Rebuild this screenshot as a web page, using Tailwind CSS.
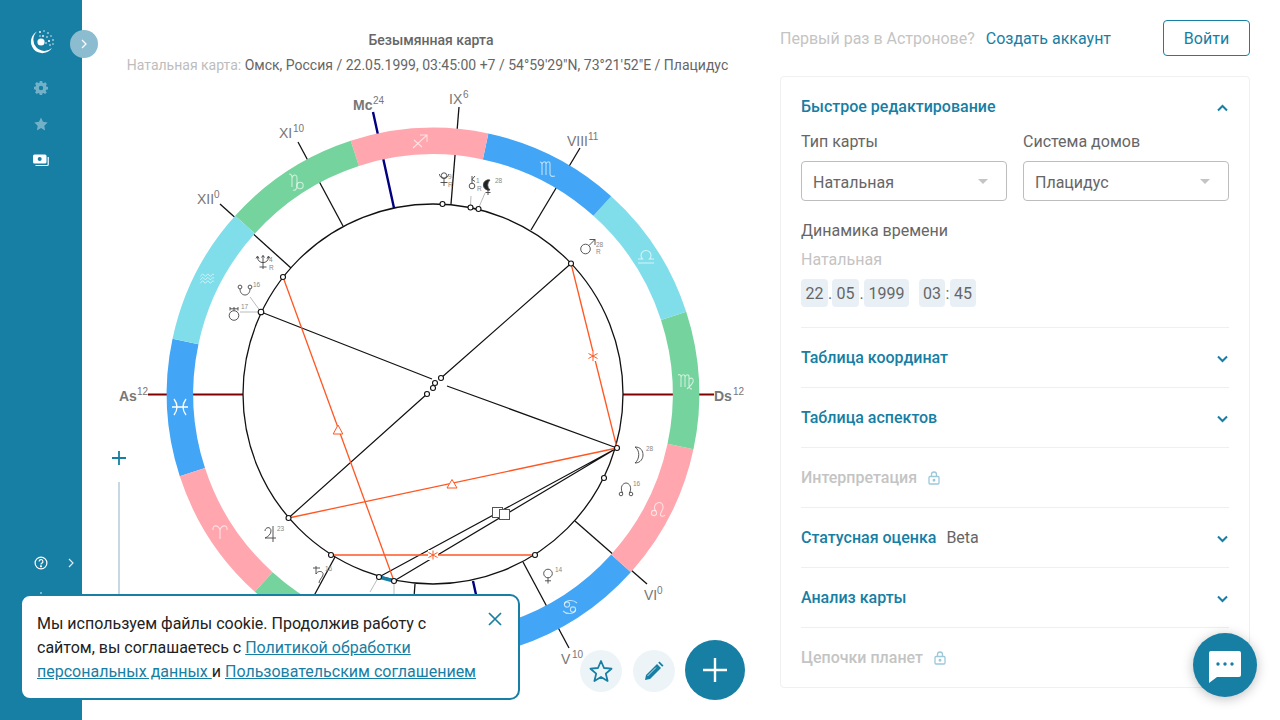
<!DOCTYPE html>
<html lang="ru">
<head>
<meta charset="utf-8">
<title>Карта</title>
<script src="https://cdn.jsdelivr.net/npm/@tailwindcss/browser@4"></script>
</head>
<body class="m-0 bg-white">
<div class="relative flex h-[720px] w-[1280px] overflow-hidden bg-white font-['Roboto',sans-serif] text-[#666]">

  <!-- Sidebar -->
  <aside class="flex h-full w-[82px] shrink-0 flex-col items-center bg-[#177ea4]">
    <svg class="mt-[29px]" width="26" height="26" viewBox="0 0 26 26">
      <path d="M9 2.5A11.5 11.5 0 1 0 24 19 A10 10 0 0 1 9 2.5Z" fill="#fff"/>
      <circle cx="13" cy="13" r="3.6" fill="#fff"/>
      <g fill="#fff">
        <circle cx="12" cy="3" r=".9"/><circle cx="16" cy="2" r=".7"/><circle cx="20" cy="4" r=".8"/><circle cx="23" cy="7" r=".7"/><circle cx="25" cy="11" r=".8"/><circle cx="25" cy="15" r=".7"/><circle cx="15" cy="7" r=".9"/><circle cx="19" cy="8" r=".8"/><circle cx="21" cy="12" r="1"/><circle cx="18" cy="14" r=".8"/><circle cx="22" cy="16" r=".8"/><circle cx="12" cy="7" r=".7"/>
      </g>
    </svg>
    <svg class="mt-[26px]" width="14" height="14" viewBox="0 0 14 14" fill="#fff" fill-opacity=".4">
      <path fill-rule="evenodd" d="M5.8 0h2.4l.4 1.9 1 .4 1.6-1 1.7 1.7-1 1.6.4 1 1.700.4v2.400l-1.900.4-.4 1 1 1.600-1.700 1.700-1.600-1-1 .4-.4 1.900H5.800l-.4-1.900-1-.4-1.600 1-1.700-1.700 1-1.600-.4-1L0 8.200V5.800l1.700-.4.4-1-1-1.600 1.700-1.700 1.600 1 1-.4zM7 4.800a2.200 2.200 0 1 0 0 4.400 2.200 2.200 0 0 0 0-4.400z"/>
    </svg>
    <svg class="mt-[22px]" width="14" height="14" viewBox="0 0 14 14" fill="#fff" fill-opacity=".4">
      <path d="M7 .5l2 4.300 4.700.6-3.400 3.300.8 4.700L7 11.100l-4.100 2.300.8-4.700L.3 5.400 5 4.800z"/>
    </svg>
    <svg class="mt-[22px]" width="16" height="14" viewBox="0 0 16 14">
      <rect x="0" y="1.500" width="13.500" height="9" rx="1.500" fill="#fff"/>
      <circle cx="6.700" cy="6" r="2" fill="#177ea4"/>
      <path d="M15.200 4v7.500a1 1 0 0 1-1 1H2.500" fill="none" stroke="#fff" stroke-width="1.200"/>
    </svg>
    <div class="mt-auto flex w-full items-center pl-[34px]">
      <svg width="14" height="14" viewBox="0 0 14 14" fill="none" stroke="#fff" stroke-width="1.200">
        <circle cx="7" cy="7" r="5.900"/>
        <path d="M5.100 5.400a1.900 1.900 0 1 1 2.800 1.700c-.6.3-.9.7-.9 1.400"/>
        <circle cx="7" cy="10.300" r=".5" fill="#fff"/>
      </svg>
      <svg class="ml-[20px]" width="6" height="10" viewBox="0 0 6 10" fill="none" stroke="#fff" stroke-width="1.200" stroke-opacity=".85"><path d="M1 1l4 4-4 4"/></svg>
    </div>
    <svg class="mt-[22px] mb-[114px]" width="14" height="14" viewBox="0 0 14 14"><circle cx="7" cy="1" r="1" fill="#fff" fill-opacity=".6"/></svg>
  </aside>

  <!-- Chart column -->
  <main class="h-full w-[698px] shrink-0">
    <div class="pt-[31px] text-center">
      <h1 class="text-[14px] leading-[18px] font-medium text-[#666]">Безымянная карта</h1>
      <p class="mt-[7px] pr-[7px] text-[14px] leading-[18px] text-[#666]"><span class="text-[#bdbdbd]">Натальная карта:</span> Омск, Россия / 22.05.1999, 03:45:00 +7 / 54°59'29"N, 73°21'52"E / Плацидус</p>
    </div>
    <svg class="mt-[16px] block" width="698" height="630" viewBox="82 90 698 630" fill="none">
      <defs>
        <g id="z-aries"><path d="M-7-2C-8-7-2-8 0-2V7M0-2C2-8 8-7 7-2"/></g>
        <g id="z-cancer"><circle cx="-3" cy="-2.500" r="2.600"/><circle cx="3" cy="2.500" r="2.600"/><path d="M-5.600-2.500C-5-7 3-8 7-4M5.600 2.500C5 7-3 8-7 4"/></g>
        <g id="z-leo"><circle cx="-4" cy="4" r="2.600"/><path d="M-2.500 2C-7-7 6-10 5-1 4.500 2 2 4 2.500 6 3 8 6 7.500 7 6"/></g>
        <g id="z-virgo"><path d="M-8-6C-6-7-5-6-5-4V6M-5-4C-4-7-1-7-1-4V6M-1-4C0-7 3-7 3-4V5C3 7 5 8 6 8M3-2C6-4 8-2 7 1 6 4 3 6 1 8"/></g>
        <g id="z-libra"><path d="M-8 6H8M-8 2H-3.500A5 5 0 1 1 3.500 2H8"/></g>
        <g id="z-scorpio"><path d="M-8-7C-6-7-6-6-6-4V6M-6-5C-5-8-2-8-2-5V6M-2-5C-1-8 2-8 2-5V5C2 7 4 8 7 7"/></g>
        <g id="z-sag"><path d="M-7 7L7-6M0-6H7V1M-6-1L2 6"/></g>
        <g id="z-cap"><path d="M-7-8C-5-8-4-6-4-4V5M-4-4C-3-8 1-8 1-4V4C1 7-1 9-3 8"/><circle cx="4" cy="3.500" r="3.200"/></g>
        <g id="z-aqua"><path d="M-8-3L-5-6-2-3 1-6 4-3 7-6 8-5M-8 1L-5-2-2 1 1-2 4 1 7-2 8-1M-8 5L-5 2-2 5 1 2 4 5 7 2 8 3"/></g>
        <g id="z-pisces"><path d="M-6-8Q0 0-6 8M6-8Q0 0 6 8M-8 0H8"/></g>
      </defs>

      <!-- House cusps -->
      <g stroke="#111" stroke-width="1.300">
        <path d="M220 204L291 268"/>
        <path d="M298 142L343 226"/>
        <path d="M459 107L451 204"/>
        <path d="M580 148L531 230"/>
        <path d="M647 584L575 521"/>
        <path d="M569 648L523 562"/>
        <path d="M335 557L290 640"/>
        <path d="M415 584L407 690"/>
      </g>
      <path d="M148 394.500H243M623 394.500H714" stroke="#800000" stroke-width="2.200"/>
      <path d="M373 112L394 208M473 581L494 676" stroke="#000080" stroke-width="2.400"/>

      <!-- Zodiac ring -->
      <g stroke-width="26.500">
        <path stroke="#42a5f5" d="M185.500 341.400A253 253 0 0 0 192.400 472.200"/>
        <path stroke="#ffa6ae" d="M192.400 472.200A253 253 0 0 0 263.700 582"/>
        <path stroke="#75d39d" d="M263.700 582A253 253 0 0 0 380.400 641.500"/>
        <path stroke="#80deea" d="M380.400 641.500A253 253 0 0 0 511.200 634.600"/>
        <path stroke="#42a5f5" d="M511.200 634.600A253 253 0 0 0 621 563.300"/>
        <path stroke="#ffa6ae" d="M621 563.300A253 253 0 0 0 680.500 446.600"/>
        <path stroke="#75d39d" d="M680.500 446.600A253 253 0 0 0 673.600 315.800"/>
        <path stroke="#80deea" d="M673.600 315.800A253 253 0 0 0 602.300 206"/>
        <path stroke="#42a5f5" d="M602.300 206A253 253 0 0 0 485.600 146.500"/>
        <path stroke="#ffa6ae" d="M485.600 146.500A253 253 0 0 0 354.800 153.400"/>
        <path stroke="#75d39d" d="M354.800 153.400A253 253 0 0 0 245 224.700"/>
        <path stroke="#80deea" d="M245 224.700A253 253 0 0 0 185.500 341.400"/>
      </g>
      <g stroke="#fff" stroke-width="1.100" stroke-opacity=".65">
        <use href="#z-pisces" transform="translate(180 407)" stroke-opacity="1" stroke-width="1.300"/>
        <use href="#z-aries" transform="translate(220 532)"/>
        <use href="#z-cancer" transform="translate(570 607)"/>
        <use href="#z-leo" transform="translate(658 509)"/>
        <use href="#z-virgo" transform="translate(686 381)"/>
        <use href="#z-libra" transform="translate(646 257)"/>
        <use href="#z-scorpio" transform="translate(548 169)"/>
        <use href="#z-sag" transform="translate(420 141)"/>
        <use href="#z-cap" transform="translate(296 182)"/>
        <use href="#z-aqua" transform="translate(207 279) scale(.85)"/>
      </g>

      <!-- Inner circle -->
      <circle cx="433" cy="394" r="190" fill="#fff" stroke="#111" stroke-width="1.300"/>

      <!-- Aspects -->
      <g stroke="#111" stroke-width="1.200">
        <path d="M571 263.500L441 378M427 394L288.500 518"/>
        <path d="M261 312L432 379M447 386L617 448"/>
        <path d="M379 577L617 448M394 581L617 448"/>
      </g>
      <path d="M379 577L394 581" stroke="#177ea4" stroke-width="3.500"/>
      <g stroke="#ff5722" stroke-width="1.300">
        <path d="M283 277L394 581"/>
        <path d="M571 263.500L617 448"/>
        <path d="M288.500 518L617 448"/>
        <path d="M331 555H535"/>
      </g>
      <g fill="#fff" stroke="#ff5722" stroke-width="1">
        <path d="M338 425L342.800 434H333.200Z"/>
        <path d="M452 479.500L457 488H447Z"/>
      </g>
      <g stroke="#ff5722" stroke-width="1">
        <rect x="588" y="351" width="10" height="10" fill="#fff" stroke="none"/>
        <path d="M593 351V361M588.500 353.500L597.500 358.500M597.500 353.500L588.500 358.500"/>
        <rect x="428" y="550" width="10" height="10" fill="#fff" stroke="none"/>
        <path d="M433 550.500V559.500M428.500 552.500L437.500 557.500M437.500 552.500L428.500 557.500"/>
      </g>
      <g fill="#fff" stroke="#555" stroke-width="1">
        <rect x="492.500" y="507.500" width="10" height="10"/>
        <rect x="499.500" y="509.500" width="10" height="10"/>
      </g>

      <!-- Leader lines -->
      <g stroke="#aaa" stroke-width=".8">
        <path d="M250 297L261 312M240 312H259M471 196L470.500 205M485 193L479 207M378 578L370 592M394 581V596"/>
      </g>

      <!-- Planet dots -->
      <g fill="#fff" stroke="#111" stroke-width="1.100">
        <circle cx="442.500" cy="204" r="2.500"/><circle cx="470.500" cy="207.500" r="2.500"/><circle cx="478.500" cy="209" r="2.500"/>
        <circle cx="571" cy="263.500" r="2.500"/><circle cx="283" cy="277" r="2.500"/><circle cx="261" cy="312" r="2.800"/>
        <circle cx="617" cy="448" r="2.500"/><circle cx="604" cy="478" r="2.500"/><circle cx="535" cy="555" r="2.500"/>
        <circle cx="394" cy="581" r="2.500"/><circle cx="379" cy="577" r="2.500"/><circle cx="331" cy="555" r="2.500"/><circle cx="288.500" cy="518" r="2.500"/>
        <circle cx="435" cy="383" r="2.500"/><circle cx="441" cy="378" r="2.500"/><circle cx="433" cy="388" r="2.500"/><circle cx="427" cy="394" r="2.500"/>
      </g>

      <!-- Planet symbols -->
      <g stroke="#444" stroke-width=".9">
        <g transform="translate(444 179)"><circle cx="0" cy="-3.500" r="2.700"/><path d="M-4.500-5A4.500 4.500 0 0 0 4.500-5M0-.5V7M-3.500 3.500H3.500"/></g>
        <g transform="translate(472 183)"><circle cx="0" cy="3" r="2.800"/><path d="M0 .2V-7M0-3.500L3-7M0-3.500L3-1.500"/></g>
        <g transform="translate(488 186)"><path d="M2-6A5.200 5.200 0 1 0 2 4 6.500 6.500 0 0 1 2-6Z" fill="#222"/><path d="M0 4V9M-2.500 6.500H2.500"/></g>
        <g transform="translate(588 247)"><circle cx="-2.500" cy="2" r="4.800"/><path d="M1 -1.500L7-7.500M1.500-7.500H7V-2"/></g>
        <g transform="translate(263 262)"><path d="M-5.500-5C-5.500 2.500 5.500 2.500 5.500-5M0-6.500V7M-3.500 5H3.500M-7-3.500L-5.500-6-4-3.500M4-3.500L5.500-6 7-3.500M-1.500-4.500L0-6.500 1.500-4.500"/></g>
        <g transform="translate(245 292)"><circle cx="-5" cy="-5" r="1.900"/><circle cx="5" cy="-5" r="1.900"/><path d="M-5-3C-5 5 5 5 5-3"/></g>
        <g transform="translate(234 313)"><circle cx="0" cy="2.500" r="4.800"/><path d="M-4-6V-2.500M4-6V-2.500M-4-4.200H4M0-6V-2.500"/></g>
        <g transform="translate(639 455)"><path d="M-4-8C1-5 1 4-4 8 2 8 4 3 4 0 4-4 2-8-4-8Z"/></g>
        <g transform="translate(626 489)"><circle cx="-5" cy="5" r="1.800"/><circle cx="5" cy="5" r="1.800"/><path d="M-3.500 4C-6.500-2-3-6 0-6S6.500-2 3.500 4"/></g>
        <g transform="translate(548 576)"><circle cx="0" cy="-2.500" r="4.300"/><path d="M0 1.800V7.500M-3 4.800H3"/></g>
        <g transform="translate(270 534)"><path d="M-5-3C-5-7 1-8 1-3 1 0-2 3-5 4H6M3-8V8"/></g>
        <g transform="translate(318 575)"><path d="M-5-7H2M-2-9V-1C0-5 6-4 5 0 4 3 1 5 1 8"/></g>
      </g>

      <!-- Degrees -->
      <g fill="#888" font-family="Liberation Sans, sans-serif" font-size="6.500">
        <text x="448" y="179">9</text><text x="448" y="187">R</text>
        <text x="476" y="183">1</text><text x="477" y="191">R</text>
        <text x="495" y="183">28</text>
        <text x="596" y="247">28</text><text x="596" y="254">R</text>
        <text x="269" y="262">4</text><text x="269" y="270">R</text>
        <text x="253" y="287">16</text>
        <text x="241" y="309">17</text>
        <text x="646" y="451">28</text>
        <text x="633" y="486">16</text>
        <text x="555" y="572">14</text>
        <text x="277" y="531">23</text>
        <text x="325" y="571">16</text>
      </g>

      <!-- Labels -->
      <g fill="#777" font-family="Liberation Sans, sans-serif" font-size="14">
        <text x="197" y="204">XII</text><text x="214" y="198" font-size="10">0</text>
        <text x="279" y="138">XI</text><text x="293" y="132" font-size="10">10</text>
        <text x="449" y="104">IX</text><text x="463" y="98" font-size="10">6</text>
        <text x="567" y="146">VIII</text><text x="588" y="140" font-size="10">11</text>
        <text x="644" y="600">VI</text><text x="657" y="594" font-size="10">0</text>
        <text x="561" y="664">V</text><text x="572" y="658" font-size="10">10</text>
        <text x="353" y="110" font-weight="700">Mc</text><text x="373" y="104" font-size="10">24</text>
        <text x="119" y="401" font-weight="700">As</text><text x="137" y="395" font-size="10">12</text>
        <text x="714" y="401" font-weight="700">Ds</text><text x="733" y="395" font-size="10">12</text>
      </g>
    </svg>
  </main>

  <!-- Right column -->
  <section class="h-full w-[470px] shrink-0">
    <header class="mt-[20px] flex h-[36px] items-center text-[16px]">
      <span class="pt-[2px] text-[#c4c4c4]">Первый раз в Астронове?</span>
      <a class="ml-[11px] pt-[2px] text-[#177ea4]">Создать аккаунт</a>
      <button class="ml-auto h-[36px] w-[87px] rounded-[4px] border border-[#177ea4] pt-[2px] text-[16px] text-[#177ea4]">Войти</button>
    </header>

    <div class="mt-[20px] h-[612px] rounded-[4px] border border-[#f0f0f0] px-[20px]">
      <div class="border-b border-[#efefef] pt-[20px] pb-[20px]">
        <div class="flex h-[20px] items-center justify-between">
          <h2 class="text-[16px] font-medium text-[#177ea4]">Быстрое редактирование</h2>
          <svg class="mt-[2px]" width="12" height="8" viewBox="0 0 12 8" fill="none" stroke="#177ea4" stroke-width="2"><path d="M1 6.500l4.500-4.500 4.500 4.500"/></svg>
        </div>
        <div class="mt-[15px] grid grid-cols-2 gap-x-[16px]">
          <div>
            <div class="h-[20px] text-[16px] leading-[20px]">Тип карты</div>
            <div class="mt-[9px] flex h-[40px] items-center justify-between rounded-[4px] border border-[#bdbdbd] pr-[18px] pl-[11px] text-[16px]">
              <span class="pt-[4px]">Натальная</span>
              <svg width="10" height="5" viewBox="0 0 10 5"><path d="M0 0h10L5 5z" fill="#c4c4c4"/></svg>
            </div>
          </div>
          <div>
            <div class="h-[20px] text-[16px] leading-[20px]">Система домов</div>
            <div class="mt-[9px] flex h-[40px] items-center justify-between rounded-[4px] border border-[#bdbdbd] pr-[18px] pl-[11px] text-[16px]">
              <span class="pt-[4px]">Плацидус</span>
              <svg width="10" height="5" viewBox="0 0 10 5"><path d="M0 0h10L5 5z" fill="#c4c4c4"/></svg>
            </div>
          </div>
        </div>
        <div class="mt-[20px] h-[20px] text-[16px] leading-[20px]">Динамика времени</div>
        <div class="mt-[9px] h-[20px] text-[16px] leading-[20px] text-[#c4c4c4]">Натальная</div>
        <div class="mt-[9px] flex h-[28px] items-center text-[16px]">
          <span class="flex h-full w-[27px] items-center justify-center rounded-[4px] bg-[#e8f0f6] pt-[2px]">22</span>
          <span class="w-[4px] pt-[2px] text-center">.</span>
          <span class="flex h-full w-[27px] items-center justify-center rounded-[4px] bg-[#e8f0f6] pt-[2px]">05</span>
          <span class="w-[5px] pt-[2px] text-center">.</span>
          <span class="flex h-full w-[45px] items-center justify-center rounded-[4px] bg-[#e8f0f6] pt-[2px]">1999</span>
          <span class="ml-[10px] flex h-full w-[26px] items-center justify-center rounded-[4px] bg-[#e8f0f6] pt-[2px]">03</span>
          <span class="w-[5px] pt-[2px] text-center">:</span>
          <span class="flex h-full w-[26px] items-center justify-center rounded-[4px] bg-[#e8f0f6] pt-[2px]">45</span>
        </div>
      </div>

      <div class="flex h-[60px] items-center justify-between border-b border-[#efefef]">
        <h2 class="text-[16px] font-medium text-[#177ea4]">Таблица координат</h2>
        <svg class="mt-[2px]" width="12" height="8" viewBox="0 0 12 8" fill="none" stroke="#177ea4" stroke-width="2"><path d="M1 1.500l4.500 4.500 4.500-4.500"/></svg>
      </div>
      <div class="flex h-[60px] items-center justify-between border-b border-[#efefef]">
        <h2 class="text-[16px] font-medium text-[#177ea4]">Таблица аспектов</h2>
        <svg class="mt-[2px]" width="12" height="8" viewBox="0 0 12 8" fill="none" stroke="#177ea4" stroke-width="2"><path d="M1 1.500l4.500 4.500 4.500-4.500"/></svg>
      </div>
      <div class="flex h-[60px] items-center gap-[11px] border-b border-[#efefef]">
        <h2 class="text-[16px] font-medium text-[#c4c4c4]">Интерпретация</h2>
        <svg width="12" height="14" viewBox="0 0 12 14" fill="none" stroke="#9cc9da" stroke-width="1.300"><rect x="1" y="5.500" width="10" height="7.500" rx="1"/><path d="M3.500 5.500V3.500a2.500 2.500 0 0 1 5 0V5.500"/><circle cx="6" cy="9.200" r=".8" fill="#9cc9da"/></svg>
      </div>
      <div class="flex h-[60px] items-center border-b border-[#efefef]">
        <h2 class="text-[16px] font-medium text-[#177ea4]">Статусная оценка</h2>
        <span class="ml-[10px] text-[16px]">Beta</span>
        <svg class="mt-[2px] ml-auto" width="12" height="8" viewBox="0 0 12 8" fill="none" stroke="#177ea4" stroke-width="2"><path d="M1 1.500l4.500 4.500 4.500-4.500"/></svg>
      </div>
      <div class="flex h-[60px] items-center justify-between border-b border-[#efefef]">
        <h2 class="text-[16px] font-medium text-[#177ea4]">Анализ карты</h2>
        <svg class="mt-[2px]" width="12" height="8" viewBox="0 0 12 8" fill="none" stroke="#177ea4" stroke-width="2"><path d="M1 1.500l4.500 4.500 4.500-4.500"/></svg>
      </div>
      <div class="flex h-[60px] items-center gap-[11px]">
        <h2 class="text-[16px] font-medium text-[#c4c4c4]">Цепочки планет</h2>
        <svg width="12" height="14" viewBox="0 0 12 14" fill="none" stroke="#9cc9da" stroke-width="1.300"><rect x="1" y="5.500" width="10" height="7.500" rx="1"/><path d="M3.500 5.500V3.500a2.500 2.500 0 0 1 5 0V5.500"/><circle cx="6" cy="9.200" r=".8" fill="#9cc9da"/></svg>
      </div>
    </div>
  </section>

  <!-- Overlays -->
  <button class="absolute top-[30px] left-[70px] flex h-[28px] w-[28px] items-center justify-center rounded-full bg-[#8bbccf]">
    <svg width="6" height="10" viewBox="0 0 6 10" fill="none" stroke="#fff" stroke-width="1.200"><path d="M1 1l4 4-4 4"/></svg>
  </button>

  <!-- Zoom slider -->
  <div class="absolute top-[450px] left-[111px] flex flex-col items-center">
    <svg width="16" height="16" viewBox="0 0 16 16" stroke="#177ea4" stroke-width="1.800"><path d="M8 1v14M1 8h14"/></svg>
    <div class="mt-[16px] h-[120px] w-[2px] bg-[#c8d8e2]"></div>
  </div>

  <!-- Floating actions -->
  <button class="absolute top-[650px] left-[580px] flex h-[42px] w-[42px] items-center justify-center rounded-full bg-[#edf4f8]">
    <svg width="24" height="24" viewBox="0 0 24 24" fill="none" stroke="#177ea4" stroke-width="1.800" stroke-linejoin="round"><path d="M12 2l3 7 7.500.7-5.700 4.900 1.800 7.400L12 18l-6.600 4 1.800-7.400L1.500 9.700 9 9z"/></svg>
  </button>
  <button class="absolute top-[650px] left-[633px] flex h-[42px] w-[42px] items-center justify-center rounded-full bg-[#edf4f8]">
    <svg width="20" height="20" viewBox="0 0 20 20" fill="#177ea4"><path d="M1 19l1-5L13 3l4 4L6 18zM14.200 1.800l1.300-1.300 4 4-1.300 1.300z"/><path d="M3.500 15L12 6.500" stroke="#edf4f8" stroke-width=".8"/></svg>
  </button>
  <button class="absolute top-[640px] left-[685px] flex h-[60px] w-[60px] items-center justify-center rounded-full bg-[#177ea4]">
    <svg width="26" height="26" viewBox="0 0 26 26" stroke="#fff" stroke-width="2.400"><path d="M13 1v24M1 13h24"/></svg>
  </button>

  <!-- Cookie notice -->
  <div class="absolute top-[594px] left-[20px] h-[106px] w-[500px] rounded-[10px] border-2 border-[#177ea4] bg-white pt-[16px] pl-[15px] text-[16px] leading-[24px] text-[#222]">
    Мы используем файлы cookie. Продолжив работу с<br>
    сайтом, вы соглашаетесь с <a class="text-[#177ea4] underline">Политикой обработки<br>персональных данных </a> и <a class="text-[#177ea4] underline">Пользовательским соглашением</a>
    <svg class="absolute top-[15px] right-[15px]" width="16" height="16" viewBox="0 0 16 16" stroke="#177ea4" stroke-width="1.700"><path d="M2 2l12 12M14 2L2 14"/></svg>
  </div>

  <!-- Chat button -->
  <button class="absolute top-[633px] left-[1193px] flex h-[64px] w-[64px] items-center justify-center rounded-full bg-[#177ea4] pt-[4px] shadow-[0_2px_12px_rgba(0,0,0,0.25)]">
    <svg width="32" height="32" viewBox="0 0 32 32"><path d="M2 0h28a2 2 0 0 1 2 2v22a2 2 0 0 1-2 2H8l-8 6V2a2 2 0 0 1 2-2z" fill="#fff"/><circle cx="9" cy="13" r="1.700" fill="#177ea4"/><circle cx="16" cy="13" r="1.700" fill="#177ea4"/><circle cx="23" cy="13" r="1.700" fill="#177ea4"/></svg>
  </button>
</div>
</body>
</html>
